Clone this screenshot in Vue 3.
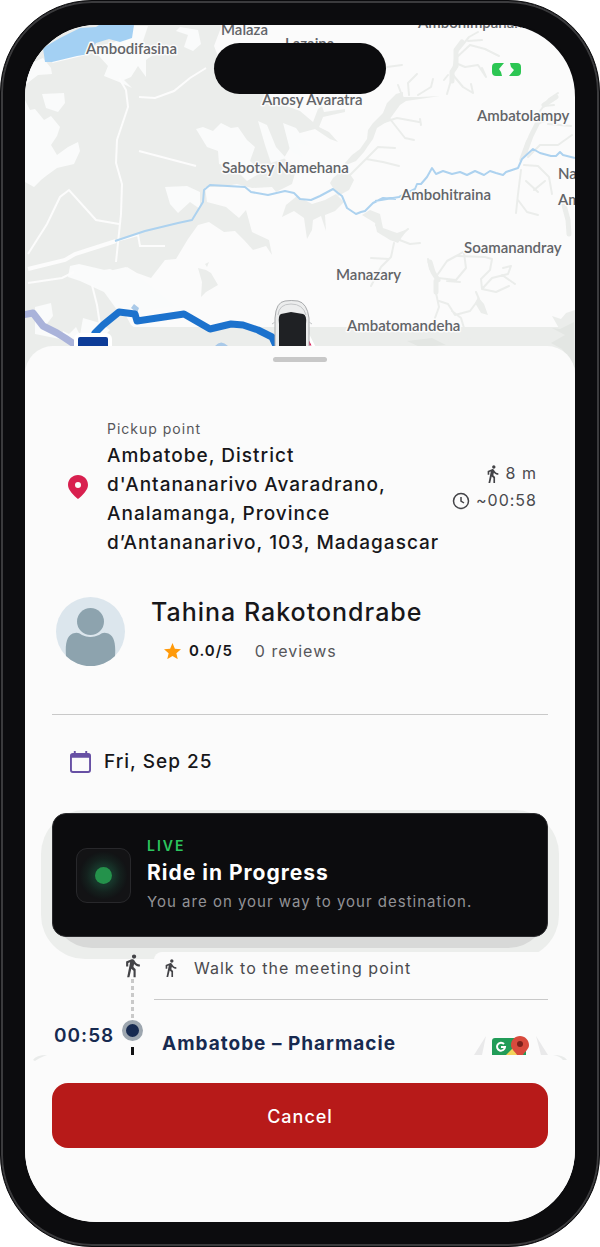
<script setup>
import { ref } from 'vue'

const places = [
  { name: 'Malaza', x: 221, y: 35 },
  { name: 'Ambodifasina', x: 86, y: 54 },
  { name: 'Lazaina', x: 285, y: 49 },
  { name: 'Ambohimpanana', x: 418, y: 28 },
  { name: 'Anosy Avaratra', x: 262, y: 105 },
  { name: 'Ambatolampy', x: 477, y: 121 },
  { name: 'Sabotsy Namehana', x: 222, y: 173 },
  { name: 'Ambohitraina', x: 401, y: 200 },
  { name: 'Nandihizana', x: 558, y: 179 },
  { name: 'Ambohibe', x: 558, y: 205 },
  { name: 'Soamanandray', x: 464, y: 253 },
  { name: 'Manazary', x: 336, y: 280 },
  { name: 'Ambatomandeha', x: 347, y: 331 },
]

const pickup = {
  address: [
    'Ambatobe, District',
    "d'Antananarivo Avaradrano,",
    'Analamanga, Province',
    'd’Antananarivo, 103, Madagascar',
  ],
  distance: '8 m',
  duration: '~00:58',
}

const driver = {
  name: 'Tahina Rakotondrabe',
  rating: '0.0/5',
  reviews: '0 reviews',
}

const cancelled = ref(false)

const walkPath =
  'M13.5 5.5c1.1 0 2-.9 2-2s-.9-2-2-2-2 .9-2 2 .9 2 2 2zM9.8 8.9L7 23h2.1l1.8-8 2.1 2v6h2v-7.5l-2.1-2 .6-3C14.8 12 16.8 13 19 13v-2c-1.9 0-3.5-1-4.3-2.4l-1-1.6c-.4-.6-1-1-1.7-1-.3 0-.5.1-.8.1L6 8.3V13h2V9.6l1.8-.7'
</script>

<template>
  <div class="phone">
    <main class="screen">
      <div class="island"></div>
      <svg class="battery" viewBox="0 0 29 13" aria-hidden="true">
        <path d="M4 0h8L7 6l2 3 1 4H4a4 4 0 0 1-4-4V4a4 4 0 0 1 4-4z" />
        <path d="M18 0h7a4 4 0 0 1 4 4v5a4 4 0 0 1-4 4h-8l5-6-3-3z" />
      </svg>

      <section class="map" aria-label="Map">
        <svg viewBox="25 25 550 355" preserveAspectRatio="xMidYMin slice">
          <!-- open land -->
          <path
            class="land"
            d="M25 25H222L214 46 232 92 262 91 281 104 300 111 313 122 318 109 322 106 324 112 345 109 345 112 323 117 319 127 329 132 338 142 330 139 315 129 300 133 291 146 284 158 296 170 292 184 276 192 272 187 252 188 237 184 220 187 205 187 207 202 226 207 239 218 246 210 252 232 269 240 272 255 266 246 253 250 244 240 235 231 224 232 209 222 198 225 188 239 176 259 165 260 151 278 137 273 127 267 122 274 110 269 90 272 113 292 120 305 131 325 159 345 25 380Z"
          />
          <path class="land" d="M198 268L206 270 211 273 218 285 206 292 201 297 202 282ZM205 264L209 262 207 267Z" />
          <path class="land" d="M297 196L312 204 325 200 336 194 344 202 335 211 325 215 326 231 321 216 313 220 312 230 307 239 304 218 294 211 282 217 286 205Z" />
          <path
            class="land"
            d="M330 183L333 178 344 169 345 163 352 155 360 149 367 139 368 130 373 123 383 113 387 103 396 94 403 92 403 97 419 97 440 96 420 99 406 101 400 105 392 116 388 121 377 128 373 139 368 146 364 152 356 161 346 165 347 170 354 180 349 190 338 196Z"
          />
          <rect class="shade" x="110" y="327" width="465" height="53" />

          <!-- built-up patches -->
          <path class="clear" d="M25 100L30 110 35 109 44 120 51 116 60 127 57 136 51 145 57 155 68 147 78 142 80 151 74 164 57 168 46 176 41 180 34 187 25 182Z" />
          <path class="clear" d="M25 66L43 58 51 68 52 74 38 75 25 85ZM42 94L64 93 65 103 58 112 46 108Z" />
          <path class="clear" d="M91 47L112 43 130 35 134 26H148L143 41 153 55 146 60V77L138 66 131 77 124 80 132 88 119 82 104 76 108 66Z" />
          <path class="clear" d="M180 27L198 30 201 44 193 51 184 47 188 35 176 31Z" />
          <path class="clear" d="M196 129L203 127 213 131 221 123 231 128 238 127 247 140 255 147 250 161 262 172 247 181 234 168 219 164 218 151 207 147Z" />
          <path class="clear" d="M258 121L267 125 276 147 286 158 271 163 265 145ZM283 123L296 128 309 146 297 143 303 158 290 150Z" />
          <path class="clear" d="M165 187L187 186 200 192 200 209 190 202 178 213 170 204Z" />
          <path class="clear" d="M70 266L79 264 109 271 126 267 150 286 174 306 120 314 104 292 80 281 68 277Z" />
          <path class="clear" d="M35 307L51 303 53 316 46 325 61 337 63 331 69 334 76 327 80 335 83 318 100 323 110 330 95 346 35 334Z" />

          <g class="road">
            <path d="M119 78L126 90 128 107 117 140 116 163 122 184 121 214 116 262" />
            <path d="M28 254L47 224 60 197 69 190 96 220 119 224" />
            <path d="M28 269L65 260 75 254 116 241" class="road-wide" />
            <path d="M28 283L62 278 74 272M92 285L97 305 100 325" />
            <path d="M139 151L196 166M139 97L155 98 174 91 190 78 206 68" />
            <path d="M116 241L138 235 140 246 165 246" />
            <path d="M52 61L90 52" class="road-wide" />
          </g>

          <!-- valleys -->
          <g class="valley">
            <path d="M409 95L408 83 417 74M418 95L431 87 433 79M403 98L398 85M378 124L397 118 419 122M390 119L405 138 414 140M421 125L420 119" />
            <path d="M347 178L368 157 378 147 395 148M366 159L383 162 399 166M387 67L402 65" />
            <path d="M447 94L452 77 456 53 469 37 478 32M457 57L470 45 485 49 499 56M468 41L482 40M458 64L465 67 478 65 486 77 482 68M453 75L463 87 473 93 471 84M448 75L444 80" />
            <path d="M452 81L452 72 456 66M456 64V50L462 42" class="valley-mid" />
            <path d="M520 160L527 141 539 123 558 116M540 111L549 99 558 93M544 106L554 105M528 157L540 145 558 145 572 135M548 124L571 126" />
            <path d="M524 155L531 136 537 124M544 105L556 97" class="valley-mid" />
            <path d="M524 165L538 166 549 177 552 194M521 170L518 194 516 213M518 200L527 212 538 215M526 181L538 192M534 190L545 181" />
            <path d="M564 205L568 220 569 234" class="valley-mid" />
            <path d="M376 225L384 234 397 238 408 229M397 239L410 244 420 243M394 243L391 257 381 267 371 286M371 258L389 259" />
            <path d="M428 259L430 269 437 277 436 293 439 307 435 318M438 274L447 261 458 255 468 249M438 278L456 280 466 268 464 253M447 281L460 282M439 301L448 304 455 315 470 311 479 299 476 292M452 311L461 318 464 328" />
            <path d="M430 262L433 272 438 280M436 281V292" class="valley-mid" />
            <path d="M458 256L485 257 492 259 490 270 481 279 482 289 496 292 509 286M482 289L492 278 508 274 511 266 503 268M502 275L515 284" />
            <path d="M400 343L433 337 455 342M468 339L483 340M434 340L432 346" />
          </g>
          <path class="land" d="M362 215L370 210 380 214 383 228 397 233 408 229 402 237 398 243 390 240 377 232 375 223ZM478 297L484 304 488 315 481 313 475 303ZM552 316L561 319 566 313 575 310V330H560Z" />
          <path class="valley-fill" d="M574 322L560 329 552 328 565 335 551 343 562 349 575 368ZM407 341L432 338 446 345 420 347Z" />

          <!-- water -->
          <path class="lake" d="M45 62L43 48 60 38 80 28 96 27 99 25H134L132 38 120 42 109 39 96 43 89 54 77 56 52 62Z" />
          <path class="lake faded" d="M131 308L134 304 139 308 137 313ZM215 346Q221 339 228 346Z" />
          <path
            class="stream"
            d="M115 241L145 231 178 223 192 220 203 202 204 190 210 185 245 187 251 192 268 195 285 191 294 193 300 199 311 200 320 196 333 189 338 193 342 196 347 208 356 214 361 212 365 211 373 203 383 198 396 199M375 201L399 197 415 189 417 184 421 184 427 177 432 168 436 174 443 171 452 174 460 172 467 175 475 171 484 175 490 171 496 173 503 175 506 172 518 168 522 159 533 149 540 153 551 156 556 156 560 152 563 155 575 158"
          />

          <!-- driven part and the rest of the route -->
          <path class="route old" d="M22 315L33 313 43 326 57 333 65 338 77 346" />
          <path class="route" d="M95 333L103 325 119 312 135 314 137 321 184 314 210 329 231 324 243 325 258 330 272 337 277 348" />

          <rect class="stop" x="76" y="335" width="34" height="34" rx="4" />
          <path class="car-pin" d="M304 335h4l6 12h-10z" />
          <g class="car">
            <path class="car-body" d="M275 380V318Q276 302 285 301 291 300 298 301 307 303 309 318V380Z" />
            <path class="car-glass" d="M279 380V324Q278 315 281 314L291 312 303 314Q307 315 306 324V380Z" />
            <path class="car-line" d="M278 315Q279 304 291 304T306 315M275 322L272 324M309 322L312 324" />
          </g>

          <text v-for="place in places" :key="place.name" class="place" :x="place.x" :y="place.y">
            {{ place.name }}
          </text>
        </svg>
      </section>

      <section class="sheet">
        <div class="handle"></div>

        <div class="details">
          <div class="pickup">
            <svg class="pin" viewBox="0 0 24 24" aria-hidden="true">
              <path d="M12 0C6.500 0 2 4.300 2 9.900 2 15.200 8 20.500 12 24c4-3.500 10-8.800 10-14.100C22 4.300 17.500 0 12 0zm0 7a3 3 0 1 1 0 6 3 3 0 0 1 0-6z" />
            </svg>
            <div class="pickup-text">
              <div class="label">Pickup point</div>
              <div class="address">
                <div v-for="line in pickup.address" :key="line">{{ line }}</div>
              </div>
            </div>
            <div class="pickup-meta">
              <div class="meta-line">
                <svg class="walk" viewBox="4 0 17 24" aria-hidden="true"><path :d="walkPath" /></svg>
                <span>{{ pickup.distance }}</span>
              </div>
              <div class="meta-line">
                <svg class="clock" viewBox="0 0 18 18" aria-hidden="true">
                  <circle cx="9" cy="9" r="7.500" />
                  <path d="M9 5v4l3 2" />
                </svg>
                <span>{{ pickup.duration }}</span>
              </div>
            </div>
          </div>

          <div class="driver">
            <svg class="avatar" viewBox="0 0 69 69" aria-hidden="true">
              <circle cx="34.500" cy="34.500" r="34.500" fill="#dce6ed" />
              <path
                d="M10 59C9 46 11 37 19 36Q22 35 26 38 34 42 43 38 47 35 50 36C58 37 60 46 59 59A34.500 34.500 0 0 1 10 59Z"
                fill="#8da3ae"
              />
              <circle cx="34.500" cy="24.500" r="15" fill="#dce6ed" />
              <circle cx="34.500" cy="24.500" r="13.500" fill="#8da3ae" />
            </svg>
            <div class="driver-text">
              <h1 class="driver-name">{{ driver.name }}</h1>
              <div class="rating">
                <svg class="star" viewBox="2 2 20 19" aria-hidden="true">
                  <path
                    d="M12 17.270L18.180 21l-1.640-7.030L22 9.240l-7.190-.61L12 2 9.190 8.630 2 9.240l5.460 4.730L5.820 21z"
                  />
                </svg>
                <strong>{{ driver.rating }}</strong>
                <span class="reviews">{{ driver.reviews }}</span>
              </div>
            </div>
          </div>

          <div class="date">
            <svg class="calendar" viewBox="0 0 22 23" aria-hidden="true">
              <path d="M19 2h-1V0h-2v2H6V0H4v2H3a3 3 0 0 0-3 3v15a3 3 0 0 0 3 3h16a3 3 0 0 0 3-3V5a3 3 0 0 0-3-3zm1 18a1 1 0 0 1-1 1H3a1 1 0 0 1-1-1V7h18z" />
            </svg>
            <span>Fri, Sep 25</span>
          </div>

          <div class="status">
            <div class="status-card">
              <div class="pulse">
                <span class="pulse-dot"></span>
              </div>
              <div>
                <div class="live">LIVE</div>
                <h2 class="status-title">Ride in Progress</h2>
                <p class="status-text">You are on your way to your destination.</p>
              </div>
            </div>
          </div>

          <div class="steps">
            <time class="step-time">00:58</time>
            <div class="rail">
              <svg class="walk walk-large" viewBox="4 0 17 24" aria-hidden="true"><path :d="walkPath" /></svg>
              <span class="rail-dots"></span>
              <span class="rail-stop"></span>
              <span class="rail-line"></span>
            </div>
            <div class="step-body">
              <div class="walk-row">
                <svg class="walk" viewBox="4 0 17 24" aria-hidden="true"><path :d="walkPath" /></svg>
                <span>Walk to the meeting point</span>
              </div>
              <div class="stop-row">
                <span class="stop-name">Ambatobe – Pharmacie</span>
                <button class="maps" type="button" aria-label="Open in maps">
                  <svg viewBox="0 0 74 40" aria-hidden="true">
                    <path d="M12 1L8 20H0ZM62 1L74 20H67Z" fill="#e9e9ea" />
                    <rect x="18" y="3" width="34" height="34" rx="3" fill="#219c58" />
                    <path d="M30 22L40 12 46 18 52 24V37H18Z" fill="#f3d35a" />
                    <path d="M30 9a4 4 0 1 0 1 3H27" fill="none" stroke="#fff" stroke-width="2" />
                    <path d="M46 1c-5 0-9 4-9 9 0 6 8 8 9 18 1-10 9-12 9-18 0-5-4-9-9-9z" fill="#d84a3d" />
                    <circle cx="46" cy="9" r="3" fill="#7b211c" />
                  </svg>
                </button>
              </div>
            </div>
          </div>
        </div>

        <footer class="actions">
          <div class="wisps" aria-hidden="true">
            <svg viewBox="0 0 14 7"><path d="M0 5Q3 0 14 0 6 3 2 6Z" /></svg>
            <svg viewBox="0 0 14 7"><path d="M14 5Q11 0 0 0 7 1 10 5Z" /></svg>
          </div>
          <button class="cancel" type="button" :disabled="cancelled" @click="cancelled = true">Cancel</button>
        </footer>
      </section>
    </main>
  </div>
</template>

<style>
body {
  margin: 0;
  background: #fff;
}
</style>

<style scoped>
.phone {
  box-sizing: border-box;
  display: flex;
  height: 100vh;
  min-height: 1000px;
  padding: 22px;
  border: 1px solid #0b0b0d;
  border-radius: 92px;
  background: #0c0c0e;
  box-shadow: inset 0 0 0 2px #3b3b3d;
  font-family: Inter, 'Liberation Sans', sans-serif;
  color: #17171a;
  letter-spacing: 1px;
}

.screen {
  position: relative;
  display: flex;
  flex: 1;
  flex-direction: column;
  min-width: 0;
  overflow: hidden;
  border: 2px solid #0c0c0e;
  border-radius: 74px;
  background: #fbfbfb;
}

.island {
  position: absolute;
  z-index: 2;
  top: 18px;
  left: 50%;
  width: 172px;
  height: 51px;
  margin-left: -86px;
  border-radius: 26px;
  background: #0c0c0e;
}

.battery {
  position: absolute;
  z-index: 2;
  top: 38px;
  right: 54px;
  width: 29px;
  fill: #2cc653;
}

.map {
  height: 355px;
  margin-bottom: -34px;
}

.map svg {
  display: block;
  width: 100%;
  height: 100%;
}

.land {
  fill: #ebedeb;
}

.shade {
  fill: #ebedeb;
}

.clear {
  fill: #fafbfb;
}

.road {
  fill: none;
  stroke: #fcfcfc;
  stroke-width: 2;
}

.road-wide {
  stroke-width: 4;
}

.valley {
  fill: none;
  stroke: #ebedeb;
  stroke-width: 2;
  stroke-linecap: round;
  stroke-linejoin: round;
}

.valley-mid {
  stroke-width: 5;
}

.valley-fill {
  fill: #e3e6e3;
}

.lake {
  fill: #a3d0f3;
}

.faded {
  fill: #a9c9e8;
}

.stream {
  fill: none;
  stroke: #add2ef;
  stroke-width: 2;
  stroke-linejoin: round;
}

.route {
  fill: none;
  stroke: #1c72cd;
  stroke-width: 7;
  stroke-linecap: round;
  stroke-linejoin: round;
}

.old {
  stroke: #aab3da;
}

.stop {
  fill: #0d3c98;
  stroke: #fff;
  stroke-width: 4;
}

.car-pin {
  fill: #d8205a;
  stroke: #fff;
  stroke-width: 3;
}

.car-body {
  fill: #eceded;
  stroke: #a9abad;
}

.car-glass {
  fill: #1f2124;
}

.car-line {
  fill: none;
  stroke: #c3c5c7;
}

.place {
  fill: #626468;
  stroke: #fbfbfb;
  stroke-width: 3;
  stroke-linejoin: round;
  paint-order: stroke;
  font-family: Lato, sans-serif;
  font-size: 15px;
  font-weight: 600;
  letter-spacing: normal;
}

.sheet {
  position: relative;
  display: flex;
  flex: 1;
  flex-direction: column;
  min-height: 0;
  border-radius: 28px 28px 0 0;
  background: #fbfbfb;
}

.handle {
  flex: none;
  width: 54px;
  height: 5px;
  margin: 11px auto 0;
  border-radius: 3px;
  background: #c8c8c8;
}

.details {
  flex: 1;
  min-height: 0;
  padding: 55px 27px 0;
  overflow: hidden;
}

.pickup {
  display: flex;
  align-items: center;
  padding: 0 11px 0 14px;
}

.pin {
  flex: none;
  width: 24px;
  fill: #d8204f;
}

.pickup-text {
  flex: 1;
  margin-left: 17px;
}

.label {
  color: #56565a;
  font-size: 14px;
  line-height: 24px;
}

.address {
  font-size: 19px;
  font-weight: 500;
  line-height: 29px;
  white-space: nowrap;
}

.pickup-meta {
  display: flex;
  flex-direction: column;
  align-items: flex-end;
  color: #4a4a4e;
  font-size: 16px;
  line-height: 27px;
}

.meta-line {
  display: flex;
  align-items: center;
  gap: 6px;
}

.walk {
  width: 14px;
  height: 20px;
  fill: #434347;
}

.clock {
  width: 18px;
  fill: none;
  stroke: #434347;
  stroke-width: 1.500;
}

.driver {
  display: flex;
  gap: 26px;
  padding: 40px 4px 48px;
  border-bottom: 1px solid #c9c9c9;
}

.avatar {
  width: 69px;
}

.driver-name {
  margin: 0;
  font-size: 25px;
  font-weight: 500;
  line-height: 30px;
}

.rating {
  display: flex;
  align-items: center;
  margin: 12px 0 0 13px;
  font-size: 16px;
  line-height: 24px;
}

.rating strong {
  margin-left: 8px;
  font-size: 15px;
  font-weight: 600;
}

.star {
  width: 17px;
  fill: #ff9a0a;
}

.reviews {
  margin-left: 22px;
  color: #56565a;
}

.date {
  display: flex;
  align-items: center;
  gap: 13px;
  padding: 32px 18px 36px;
  font-size: 19px;
  font-weight: 500;
  line-height: 30px;
}

.calendar {
  width: 21px;
  fill: #6750a4;
}

.status {
  position: relative;
  z-index: 0;
}

/* the two flat steps of the card's shadow */
.status::before,
.status::after {
  position: absolute;
  z-index: -1;
  content: '';
}

.status::before {
  inset: -3px -11px -22px;
  border-radius: 44px;
  background: #eceeec;
}

.status::after {
  inset: 10px 0 -11px;
  border-radius: 40px;
  background: #d8d9d8;
}

.status-card {
  display: flex;
  align-items: center;
  gap: 16px;
  padding: 23px;
  border: 1px solid #2b2b2d;
  border-radius: 14px;
  background: #0c0c0e;
}

.pulse {
  display: grid;
  flex: none;
  place-items: center;
  width: 53px;
  height: 53px;
  border: 1px solid #28282b;
  border-radius: 11px;
  background: radial-gradient(circle, #17352a 0 10px, #14201d 17px, #121315 24px, #131315 25px);
}

.pulse-dot {
  width: 17px;
  height: 17px;
  border-radius: 50%;
  background: #24924b;
}

.live {
  color: #2cc65e;
  font-size: 14px;
  font-weight: 600;
  line-height: 18px;
  letter-spacing: 2px;
}

.status-title {
  margin: 0;
  color: #fff;
  font-size: 21px;
  font-weight: 700;
  line-height: 36px;
}

.status-text {
  margin: 0;
  color: #929296;
  font-size: 15px;
  line-height: 22px;
}

.steps {
  display: flex;
  position: relative;
  z-index: 1;
  margin-top: 15px;
}

.step-time {
  width: 68px;
  padding: 72px 0 0 2px;
  color: #172a50;
  font-size: 19px;
  font-weight: 600;
  line-height: 24px;
}

.rail {
  display: flex;
  flex: none;
  flex-direction: column;
  align-items: center;
  width: 21px;
}

.walk-large {
  flex: none;
  width: 18px;
  height: 27px;
}

.rail-dots {
  width: 3px;
  height: 41px;
  background: repeating-linear-gradient(#c9c9c9 0 4px, transparent 4px 7px);
}

.rail-stop {
  box-sizing: border-box;
  width: 21px;
  height: 21px;
  border: 4px solid #9da6af;
  border-radius: 50%;
  background: #172a50;
}

.rail-line {
  width: 3px;
  height: 50px;
  margin-top: 6px;
  background: #111113;
}

.step-body {
  flex: 1;
  min-width: 0;
  margin-left: 11px;
}

.walk-row {
  display: flex;
  align-items: center;
  gap: 16px;
  padding: 4px 10px 19px;
  border-bottom: 1px solid #c9c9c9;
  border-radius: 8px 0 0;
  background: #fbfbfb;
  color: #4a4a4e;
  font-size: 16px;
  line-height: 24px;
}

.stop-row {
  display: flex;
  align-items: flex-start;
  justify-content: space-between;
  padding: 32px 0 0 8px;
}

.stop-name {
  color: #172a50;
  font-size: 19px;
  font-weight: 700;
  line-height: 24px;
}

.maps {
  width: 74px;
  margin: 3px 0 0;
  padding: 0;
  border: 0;
  background: none;
}

.maps svg {
  display: block;
}

.actions {
  flex: none;
  padding: 0 27px 74px;
}

.wisps {
  display: flex;
  justify-content: space-between;
  height: 28px;
  margin: 0 -19px;
}

.wisps svg {
  width: 14px;
  height: 7px;
  fill: #e9ebea;
}

.cancel {
  display: block;
  width: 100%;
  padding: 21px 20px 19px;
  border: 0;
  border-radius: 16px;
  background: #b71a19;
  color: #fff;
  font-family: inherit;
  font-size: 18px;
  font-weight: 500;
  line-height: 25px;
  letter-spacing: inherit;
}
</style>
